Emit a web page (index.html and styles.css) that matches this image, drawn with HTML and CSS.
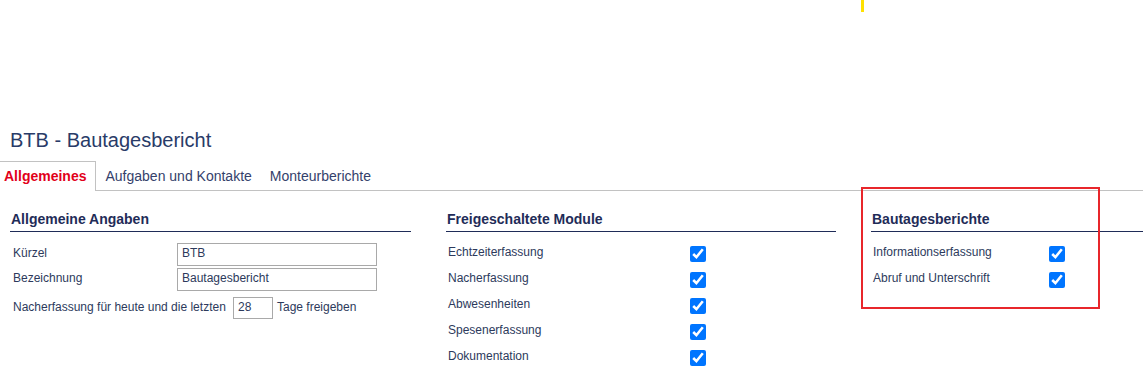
FILE: index.html
```html
<!DOCTYPE html>
<html lang="de">
<head>
<meta charset="utf-8">
<title>BTB - Bautagesbericht</title>
<link rel="stylesheet" href="styles.css">
</head>
<body>
<header class="topbar">
  <span class="marker"></span>
</header>
<h1 class="page-title">BTB - Bautagesbericht</h1>
<nav class="tabs">
  <a class="tab active">Allgemeines</a>
  <a class="tab">Aufgaben und Kontakte</a>
  <a class="tab">Monteurberichte</a>
</nav>
<main class="content">
  <section class="col col-general">
    <h2 class="section-title">Allgemeine Angaben</h2>
    <div class="field-row first">
      <label class="field-label">Kürzel</label>
      <input class="text-input wide" type="text" value="BTB">
    </div>
    <div class="field-row">
      <label class="field-label">Bezeichnung</label>
      <input class="text-input wide" type="text" value="Bautagesbericht">
    </div>
    <div class="field-row days">
      <span class="inline-label">Nacherfassung für heute und die letzten</span>
      <input class="text-input small" type="text" value="28">
      <span class="after-label">Tage freigeben</span>
    </div>
  </section>
  <section class="col col-modules">
    <h2 class="section-title">Freigeschaltete Module</h2>
    <div class="check-list">
      <div class="check-row"><span class="check-label">Echtzeiterfassung</span><input type="checkbox" class="check" checked></div>
      <div class="check-row"><span class="check-label">Nacherfassung</span><input type="checkbox" class="check" checked></div>
      <div class="check-row"><span class="check-label">Abwesenheiten</span><input type="checkbox" class="check" checked></div>
      <div class="check-row"><span class="check-label">Spesenerfassung</span><input type="checkbox" class="check" checked></div>
      <div class="check-row"><span class="check-label">Dokumentation</span><input type="checkbox" class="check" checked></div>
    </div>
  </section>
  <section class="col col-reports">
    <h2 class="section-title">Bautagesberichte</h2>
    <div class="check-list">
      <div class="check-row"><span class="check-label">Informationserfassung</span><input type="checkbox" class="check" checked></div>
      <div class="check-row"><span class="check-label">Abruf und Unterschrift</span><input type="checkbox" class="check" checked></div>
    </div>
  </section>
  <div class="highlight"></div>
</main>
</body>
</html>
```

FILE: styles.css
```css
* { box-sizing: border-box; }

html, body {
  margin: 0;
  padding: 0;
  background: #ffffff;
  font-family: "Liberation Sans", Arial, sans-serif;
  color: #2d3a5c;
  overflow: hidden;
}

.topbar {
  height: 128px;
}

.marker {
  display: block;
  margin-left: 861px;
  width: 3px;
  height: 12px;
  background: #ffe100;
}

.page-title {
  margin: 0 0 9px 10px;
  font-size: 20px;
  line-height: 24px;
  font-weight: normal;
  color: #293b68;
}

.tabs {
  display: flex;
  border-bottom: 1px solid #c2c2c2;
  height: 30px;
}

.tab {
  display: block;
  font-size: 14px;
  line-height: 16px;
  padding: 6px 8px 6px 8px;
  border: 1px solid transparent;
  border-bottom: none;
  color: #34416b;
  white-space: nowrap;
  height: 29px;
}

.tab.active {
  color: #e2001a;
  font-weight: bold;
  border-color: #c2c2c2;
  border-left: none;
  padding-left: 4px;
  padding-right: 9px;
  background: #ffffff;
  height: 30px;
}

.content {
  position: relative;
  display: flex;
  align-items: flex-start;
  padding-top: 20px;
}

.col-general {
  margin-left: 10px;
  width: 401px;
  flex: none;
}

.col-modules {
  margin-left: 35px;
  width: 390px;
  flex: none;
}

.col-reports {
  margin-left: 35px;
  flex: 1;
  min-width: 0;
}

.section-title {
  margin: 0;
  font-size: 14px;
  line-height: 16px;
  font-weight: bold;
  color: #1f2c58;
  padding: 0 0 4px 1px;
  border-bottom: 1px solid #1f2c58;
  white-space: nowrap;
}

.field-row {
  display: flex;
  align-items: flex-start;
  margin-top: 2px;
  font-size: 12px;
  line-height: 14px;
}

.field-row.first { margin-top: 11px; }
.field-row.days { margin-top: 6px; }

.field-label {
  width: 167px;
  padding: 3px 0 0 3px;
  flex: none;
}

.inline-label {
  width: 223px;
  padding: 3px 0 0 3px;
  white-space: nowrap;
  flex: none;
}

.after-label {
  padding: 3px 0 0 4px;
  white-space: nowrap;
}

.text-input {
  font-family: "Liberation Sans", Arial, sans-serif;
  font-size: 12px;
  line-height: 14px;
  color: #2d3a5c;
  border: 1px solid #a9a9a9;
  border-radius: 0;
  padding: 0 3px 3px 4px;
  margin: 0;
  background: #ffffff;
  height: 23px;
  outline: none;
}

.text-input.wide { width: 200px; }
.text-input.small { width: 40px; height: 22px; padding-bottom: 2px; }

.check-list {
  margin-top: 9px;
}

.check-row {
  display: flex;
  align-items: flex-start;
  height: 26px;
  padding-top: 5px;
  font-size: 12px;
  line-height: 14px;
}

.check-label {
  padding-left: 2px;
  margin-top: -1px;
  white-space: nowrap;
  flex: none;
}

.col-modules .check-label { width: 244px; }
.col-reports .check-label { width: 178px; }

.check {
  width: 16px;
  height: 16px;
  margin: 0;
  accent-color: #0075ff;
  flex: none;
}

.highlight {
  position: absolute;
  left: 861px;
  top: -4px;
  width: 239px;
  height: 122px;
  border: 2px solid #e8262b;
  pointer-events: none;
}
```
